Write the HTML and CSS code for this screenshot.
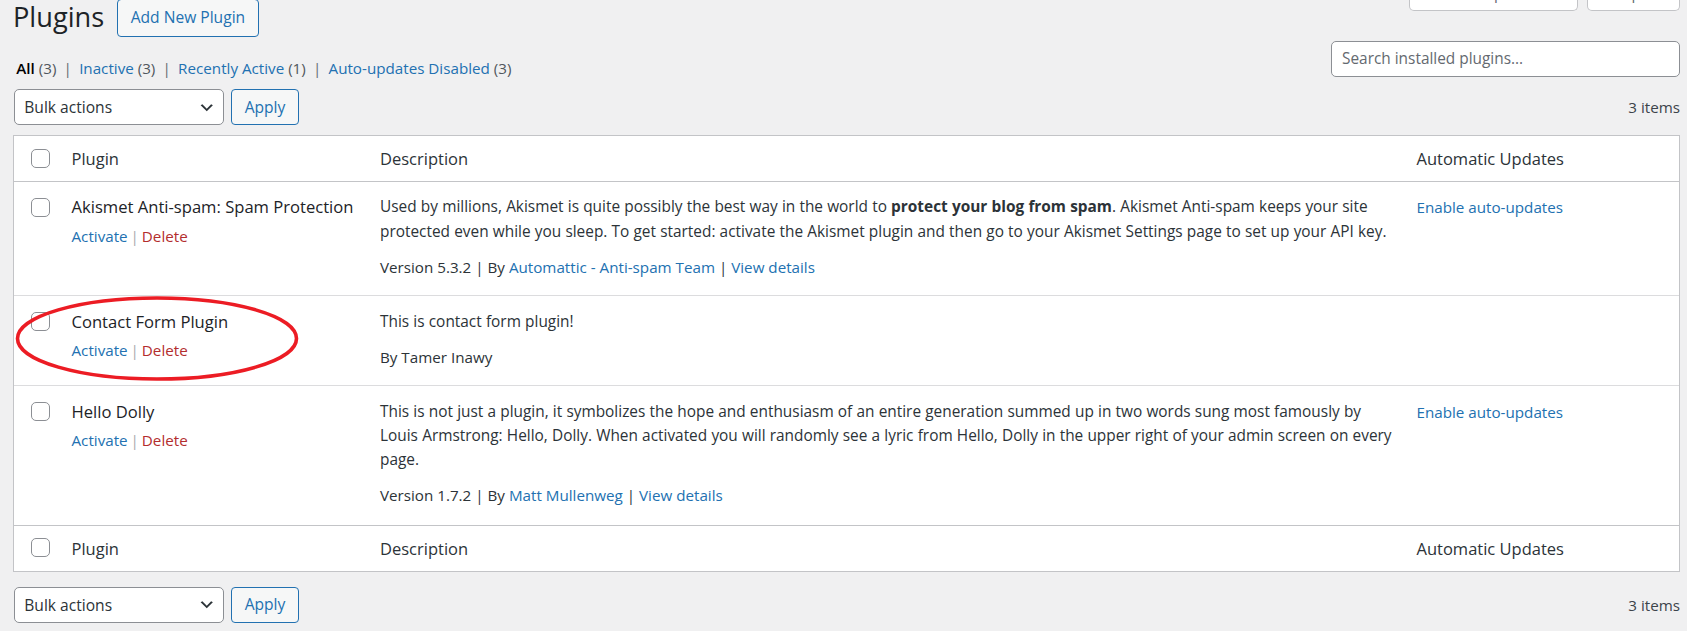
FILE: index.html
```html
<!DOCTYPE html>
<html lang="en">
<head>
<meta charset="utf-8">
<title>Plugins</title>
<link rel="stylesheet" href="styles.css">
</head>
<body>
<div class="wrap">
  <header class="title-row">
    <h1 class="page-title">Plugins</h1>
    <a class="btn title-action" href="#">Add New Plugin</a>
    <div class="screen-meta-links">
      <button class="meta-btn meta-options" type="button">Screen Options <span class="meta-arrow">&#9662;</span></button>
      <button class="meta-btn meta-help" type="button">Help <span class="meta-arrow">&#9662;</span></button>
    </div>
  </header>

  <div class="filter-row">
    <ul class="subsubsub">
      <li><a class="current" href="#">All <span class="count">(3)</span></a> |</li>
      <li><a href="#">Inactive <span class="count">(3)</span></a> |</li>
      <li><a href="#">Recently Active <span class="count">(1)</span></a> |</li>
      <li><a href="#">Auto-updates Disabled <span class="count">(3)</span></a></li>
    </ul>
    <input class="search-input" type="search" placeholder="Search installed plugins...">
  </div>

  <div class="tablenav">
    <div class="bulk-select"><span>Bulk actions</span><svg class="chevron" viewBox="0 0 20 20" width="17.5" height="17.5" aria-hidden="true"><path d="M5 6l5 5 5-5 2 1-7 7-7-7 2-1z" fill="#2c3338"/></svg></div>
    <button class="btn btn-apply" type="button">Apply</button>
    <span class="displaying-num">3 items</span>
  </div>

  <table class="plugins">
    <colgroup>
      <col class="c-check">
      <col class="c-plugin">
      <col class="c-desc">
      <col class="c-auto">
    </colgroup>
    <thead>
      <tr>
        <th class="check-col"><input class="cb" type="checkbox" aria-label="Select all"></th>
        <th>Plugin</th>
        <th>Description</th>
        <th>Automatic Updates</th>
      </tr>
    </thead>
    <tbody>
      <tr>
        <th class="check-col"><input class="cb" type="checkbox" aria-label="Select Akismet"></th>
        <td class="plugin-cell">
          <strong class="plugin-name">Akismet Anti-spam: Spam Protection</strong>
          <div class="row-actions"><a href="#">Activate</a> | <a class="delete" href="#">Delete</a></div>
        </td>
        <td class="desc-cell">
          <p>Used by millions, Akismet is quite possibly the best way in the world to <strong>protect your blog from spam</strong>. Akismet Anti-spam keeps your site<br>protected even while you sleep. To get started: activate the Akismet plugin and then go to your Akismet Settings page to set up your API key.</p>
          <p class="meta">Version 5.3.2 | By <a href="#">Automattic - Anti-spam Team</a> | <a href="#">View details</a></p>
        </td>
        <td class="auto-cell"><a href="#">Enable auto-updates</a></td>
      </tr>
      <tr>
        <th class="check-col"><input class="cb" type="checkbox" aria-label="Select Contact Form Plugin"></th>
        <td class="plugin-cell">
          <strong class="plugin-name">Contact Form Plugin</strong>
          <div class="row-actions"><a href="#">Activate</a> | <a class="delete" href="#">Delete</a></div>
        </td>
        <td class="desc-cell">
          <p>This is contact form plugin!</p>
          <p class="meta">By Tamer Inawy</p>
        </td>
        <td class="auto-cell"></td>
      </tr>
      <tr>
        <th class="check-col"><input class="cb" type="checkbox" aria-label="Select Hello Dolly"></th>
        <td class="plugin-cell">
          <strong class="plugin-name">Hello Dolly</strong>
          <div class="row-actions"><a href="#">Activate</a> | <a class="delete" href="#">Delete</a></div>
        </td>
        <td class="desc-cell desc-last">
          <p>This is not just a plugin, it symbolizes the hope and enthusiasm of an entire generation summed up in two words sung most famously by<br>Louis Armstrong: Hello, Dolly. When activated you will randomly see a lyric from Hello, Dolly in the upper right of your admin screen on every<br>page.</p>
          <p class="meta">Version 1.7.2 | By <a href="#">Matt Mullenweg</a> | <a href="#">View details</a></p>
        </td>
        <td class="auto-cell"><a href="#">Enable auto-updates</a></td>
      </tr>
    </tbody>
    <tfoot>
      <tr>
        <th class="check-col"><input class="cb" type="checkbox" aria-label="Select all"></th>
        <th>Plugin</th>
        <th>Description</th>
        <th>Automatic Updates</th>
      </tr>
    </tfoot>
  </table>

  <div class="tablenav tablenav-bottom">
    <div class="bulk-select"><span>Bulk actions</span><svg class="chevron" viewBox="0 0 20 20" width="17.5" height="17.5" aria-hidden="true"><path d="M5 6l5 5 5-5 2 1-7 7-7-7 2-1z" fill="#2c3338"/></svg></div>
    <button class="btn btn-apply" type="button">Apply</button>
    <span class="displaying-num">3 items</span>
  </div>
</div>

<svg class="annotation" width="285" height="88" viewBox="0 0 285 88" aria-hidden="true">
  <ellipse cx="142" cy="43.5" rx="139.5" ry="40.5" fill="none" stroke="#ec1c24" stroke-width="3.6"/>
</svg>
</body>
</html>
```

FILE: styles.css
```css
* { box-sizing: border-box; }

html, body { margin: 0; }

body {
  position: relative;
  overflow: hidden;
  background: #f0f0f1;
  color: #3c434a;
  font-family: "Open Sans", "Noto Sans", sans-serif;
  font-size: 15.2px;
  line-height: 24.4px;
}

a { color: #2271b1; text-decoration: none; }

.wrap { padding: 0 7px 0 13px; }

/* ---------- header ---------- */
.title-row {
  display: flex;
  align-items: flex-start;
  margin-top: -2px;
}

.page-title {
  margin: 0 13px 0 0;
  font-size: 27.2px;
  font-weight: 400;
  line-height: 37.5px;
  color: #1d2327;
}

.btn {
  display: inline-flex;
  align-items: center;
  justify-content: center;
  border: 1px solid #2271b1;
  border-radius: 4px;
  background: #f6f7f7;
  color: #2271b1;
  font-family: inherit;
  font-size: 15.6px;
  line-height: 1;
}

.title-action {
  margin-top: 1px;
  height: 37.5px;
  padding: 0 12.5px;
}

.screen-meta-links {
  display: flex;
  gap: 9px;
  margin-left: auto;
  margin-top: -22px;
}

.meta-btn {
  height: 35px;
  padding: 3.75px 7px 3.75px 20px;
  border: 1px solid #c3c4c7;
  border-top: 0;
  border-radius: 0 0 5px 5px;
  background: #fff;
  color: #646970;
  font-family: inherit;
  font-size: 15.2px;
  line-height: 27.5px;
  text-align: left;
}

.meta-options { width: 169px; }
.meta-help { width: 93px; }
.meta-arrow { font-size: 12px; }

/* ---------- filters + search ---------- */
.filter-row {
  display: flex;
  justify-content: space-between;
  align-items: flex-start;
  margin-top: 4px;
}

.subsubsub {
  margin: 15.6px 0 0 0;
  padding: 0;
  list-style: none;
  color: #646970;
}

.subsubsub li { display: inline; }
.subsubsub a { padding: 0 3.25px; }
.subsubsub .current { color: #000; font-weight: 600; }
.subsubsub .current .count { font-weight: 400; }
.subsubsub .count { color: #50575e; }

.search-input {
  width: 349px;
  height: 36px;
  margin: 0;
  padding: 0 10px;
  border: 1px solid #8c8f94;
  border-radius: 5px;
  background: #fff;
  color: #2c3338;
  font-family: inherit;
  font-size: 15.4px;
  outline: none;
}

.search-input::placeholder { color: #646970; }

/* ---------- table nav ---------- */
.tablenav {
  display: flex;
  align-items: center;
  height: 36px;
  margin: 8.8px 0 9.7px;
}

.tablenav-bottom { margin: 15.3px 0 0; }

.bulk-select {
  display: flex;
  align-items: center;
  justify-content: space-between;
  width: 209.3px;
  height: 36px;
  margin-left: 1.3px;
  padding: 0 7px 0 9px;
  border: 1px solid #8c8f94;
  border-radius: 5px;
  background: #fff;
  color: #2c3338;
  font-size: 15.6px;
}

.chevron { display: block; }

.btn-apply {
  width: 68px;
  height: 36px;
  margin-left: 7.4px;
  padding: 0;
}

.displaying-num {
  margin-left: auto;
  color: #3c434a;
}

/* ---------- plugins table ---------- */
.plugins {
  width: 100%;
  table-layout: fixed;
  border-collapse: separate;
  border-spacing: 0;
  border: 1px solid #c3c4c7;
  background: #fff;
  color: #2c3338;
}

.c-check { width: 45px; }
.c-plugin { width: 308.5px; }
.c-desc { width: 1036.5px; }

.plugins th,
.plugins td {
  vertical-align: top;
  text-align: left;
  font-weight: 400;
}

.plugins thead th,
.plugins tfoot th {
  padding: 10.75px 12.5px 9.75px;
  font-size: 16.5px;
  line-height: 24.5px;
  color: #2c3338;
}

.plugins thead th { border-bottom: 1px solid #c3c4c7; }

.plugins tfoot th {
  padding-bottom: 9.5px;
  border-top: 1px solid #c3c4c7;
}

.plugins thead th.check-col { padding: 13.3px 0 0 17.4px; }
.plugins tfoot th.check-col { padding: 12.3px 0 0 17.4px; }

.plugins tbody th,
.plugins tbody td { border-bottom: 1px solid #dcdcde; }

.plugins tbody tr:last-child th,
.plugins tbody tr:last-child td { border-bottom: 0; }

.plugins tbody th.check-col { padding: 15.7px 0 0 17.4px; }

.cb {
  display: block;
  width: 19px;
  height: 19px;
  margin: 0;
  border: 1px solid #8c8f94;
  border-radius: 5px;
  background: #fff;
  appearance: none;
  -webkit-appearance: none;
}

.plugin-cell { padding: 13.5px 12.5px 0; }

.plugin-name {
  display: block;
  font-size: 16.6px;
  font-weight: 400;
  line-height: 24.4px;
  color: #1d2327;
}

.row-actions {
  margin-top: 3.9px;
  color: #a7aaad;
  word-spacing: -1px;
}

.row-actions .delete { color: #b32d2e; }

.desc-cell { padding: 13.5px 12.5px 16px; }
.desc-cell.desc-last { padding-bottom: 17.5px; }

.desc-cell p {
  margin: 0;
  white-space: nowrap;
  color: #2c3338;
  font-size: 15.4px;
  word-spacing: 0.2px;
}

.desc-cell p.meta {
  font-size: 15.2px;
  word-spacing: 0;
}

.desc-cell p + p { margin-top: 10.5px; }
.desc-cell strong { font-weight: 700; }

.auto-cell { padding: 13.5px 12.5px; }

/* ---------- annotation ---------- */
.annotation {
  position: absolute;
  left: 15px;
  top: 295px;
}
```
